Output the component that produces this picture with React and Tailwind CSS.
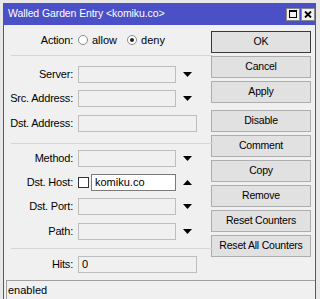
import React from "react";

const font = { fontFamily: '"Liberation Sans", Arial, sans-serif' };

function Arrow({ up }) {
  return (
    <div className="w-[22px] h-full flex items-center justify-center">
      <svg width="9" height="5" viewBox="0 0 9 5">
        {up ? <polygon points="0,5 9,5 4.5,0" fill="#000" /> : <polygon points="0,0 9,0 4.5,5" fill="#000" />}
      </svg>
    </div>
  );
}

function Label({ children }) {
  return <div className="w-[69px] text-right text-[11px] text-[#000] shrink-0 tracking-[-0.2px]">{children}</div>;
}

function Input({ w, white, children }) {
  return (
    <div
      className={`h-[17px] border flex items-center px-[3px] text-[11px] ${white ? "bg-white border-[#7a7a7a]" : "bg-[#f0f0f0] border-[#bdbdbd]"}`}
      style={{ width: w }}
    >
      {children}
    </div>
  );
}

function Row({ h, label, children }) {
  return (
    <div className="flex items-center" style={{ height: h }}>
      <Label>{label}</Label>
      <div className="w-[5px] shrink-0" />
      {children}
    </div>
  );
}

function Sep({ h, top }) {
  return (
    <div style={{ height: h }} className="relative">
      <div className="border-t border-[#d5d5d5] ml-[7px] mr-[-4px]" style={{ marginTop: top }} />
    </div>
  );
}

function Btn({ children, def }) {
  return (
    <div
      className={`h-[22px] w-[100px] flex items-center justify-center text-[10.5px] tracking-[-0.2px] bg-[#e1e1e1] border ${def ? "border-[#3a3a3a]" : "border-[#adadad]"}`}
    >
      {children}
    </div>
  );
}

function Radio({ checked }) {
  return (
    <div className="w-[10px] h-[10px] rounded-full border border-[#8a8a8a] bg-white flex items-center justify-center">
      {checked && <div className="w-[4px] h-[4px] rounded-full bg-[#222]" />}
    </div>
  );
}

export default function App() {
  return (
    <div className="w-[320px] h-[299px] bg-[#e8e8e8] overflow-hidden relative" style={font}>
      <div className="absolute left-[3px] top-[3px] w-[313px] h-[300px] flex flex-col">
        {/* Title bar */}
        <div className="h-[22px] bg-[#4b50c6] flex items-center pl-[5px] pr-[1px] shrink-0">
          <div className="text-white text-[10.5px] tracking-[-0.1px] flex-1">Walled Garden Entry &lt;komiku.co&gt;</div>
          <div className="w-[14px] h-[13px] bg-[#f0f0f0] border border-[#888] flex items-center justify-center mr-[1px]">
            <div className="w-[8px] h-[8px] border border-[#000] border-t-2" />
          </div>
          <div className="w-[14px] h-[13px] bg-[#f0f0f0] border border-[#888] flex items-center justify-center">
            <svg width="8" height="7" viewBox="0 0 8 7">
              <path d="M1 0.5 L7 6.5 M7 0.5 L1 6.5" stroke="#000" strokeWidth="1.8" />
            </svg>
          </div>
        </div>
        {/* Body */}
        <div className="flex-1 bg-[#f0f0f0] border-l border-r border-[#5a5a5a] flex flex-col">
          <div className="flex h-[255px]">
            {/* form */}
            <div className="w-[205px] shrink-0 flex flex-col pt-[4px]">
              <div className="flex items-center h-[22px]">
                <Label>Action:</Label>
                <div className="w-[5px]" />
                <Radio />
                <span className="ml-[4px] text-[11px]">allow</span>
                <div className="w-[10px]" />
                <Radio checked />
                <span className="ml-[4px] text-[11px]">deny</span>
              </div>
              <Sep h={11} top={4} />
              <Row h={24} label="Server:">
                <Input w={98} />
                <Arrow />
              </Row>
              <Row h={25} label="Src. Address:">
                <Input w={98} />
                <Arrow />
              </Row>
              <Row h={24} label="Dst. Address:">
                <Input w={119} />
              </Row>
              <Sep h={11} top={8} />
              <Row h={24} label="Method:">
                <Input w={98} />
                <Arrow />
              </Row>
              <Row h={24} label="Dst. Host:">
                <div className="w-[11px] h-[11px] border border-[#333] bg-white shrink-0" />
                <div className="w-[2px]" />
                <Input w={85} white>komiku.co</Input>
                <Arrow up />
              </Row>
              <Row h={25} label="Dst. Port:">
                <Input w={98} />
                <Arrow />
              </Row>
              <Row h={25} label="Path:">
                <Input w={98} />
                <Arrow />
              </Row>
              <Sep h={8} top={4} />
              <Row h={24} label="Hits:">
                <Input w={119}>0</Input>
              </Row>
            </div>
            {/* buttons */}
            <div className="flex flex-col pl-[2px] pt-[6px] gap-[3px]">
              <Btn def>OK</Btn>
              <Btn>Cancel</Btn>
              <Btn>Apply</Btn>
              <div className="h-[1px]" />
              <Btn>Disable</Btn>
              <Btn>Comment</Btn>
              <Btn>Copy</Btn>
              <Btn>Remove</Btn>
              <Btn>Reset Counters</Btn>
              <Btn>Reset All Counters</Btn>
            </div>
          </div>
          <div className="border-t border-[#a0a0a0] ml-[2px] h-[20px] flex items-center pl-[1px] text-[11px] border-l">
            enabled
          </div>
        </div>
      </div>
    </div>
  );
}
